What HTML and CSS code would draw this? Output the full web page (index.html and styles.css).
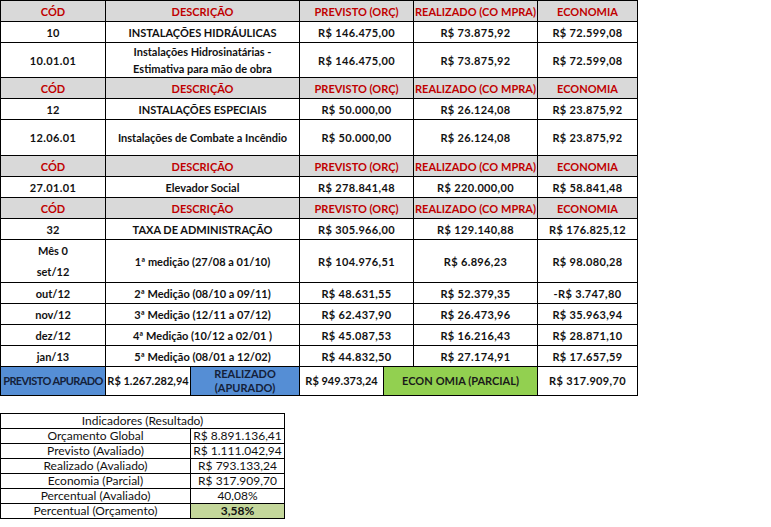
FILE: index.html
```html
<!DOCTYPE html>
<html lang="pt-BR">
<head>
<meta charset="utf-8">
<title>Planilha</title>
<link rel="stylesheet" href="styles.css">
</head>
<body>
<div class="sheet">
<table class="main">
  <colgroup>
    <col class="c1"><col class="c2"><col class="c3"><col class="c4"><col class="c5"><col class="c6"><col class="c7">
  </colgroup>
  <tr class="hd"><td>CÓD</td><td colspan="2">DESCRIÇÃO</td><td colspan="2">PREVISTO (ORÇ)</td><td>REALIZADO (CO<span class="k">MPRA)</span></td><td>ECONOMIA</td></tr>
  <tr class="r"><td>10</td><td colspan="2">INSTALAÇÕES HIDRÁULICAS</td><td colspan="2" class="m">R$ 146.475,00</td><td class="m">R$ 73.875,92</td><td class="m">R$ 72.599,08</td></tr>
  <tr class="tall"><td class="m">10.01.01</td><td colspan="2">Instalações Hidrosinatárias -<br>Estimativa para mão de obra</td><td colspan="2" class="m">R$ 146.475,00</td><td class="m">R$ 73.875,92</td><td class="m">R$ 72.599,08</td></tr>
  <tr class="hd"><td>CÓD</td><td colspan="2">DESCRIÇÃO</td><td colspan="2">PREVISTO (ORÇ)</td><td>REALIZADO (CO<span class="k">MPRA)</span></td><td>ECONOMIA</td></tr>
  <tr class="r"><td>12</td><td colspan="2">INSTALAÇÕES ESPECIAIS</td><td colspan="2" class="m">R$ 50.000,00</td><td class="m">R$ 26.124,08</td><td class="m">R$ 23.875,92</td></tr>
  <tr class="tall2"><td class="m">12.06.01</td><td colspan="2">Instalações de Combate a Incêndio</td><td colspan="2" class="m">R$ 50.000,00</td><td class="m">R$ 26.124,08</td><td class="m">R$ 23.875,92</td></tr>
  <tr class="hd"><td>CÓD</td><td colspan="2">DESCRIÇÃO</td><td colspan="2">PREVISTO (ORÇ)</td><td>REALIZADO (CO<span class="k">MPRA)</span></td><td>ECONOMIA</td></tr>
  <tr class="r"><td class="m">27.01.01</td><td colspan="2">Elevador Social</td><td colspan="2" class="m">R$ 278.841,48</td><td class="m">R$ 220.000,00</td><td class="m">R$ 58.841,48</td></tr>
  <tr class="hd"><td>CÓD</td><td colspan="2">DESCRIÇÃO</td><td colspan="2">PREVISTO (ORÇ)</td><td>REALIZADO (CO<span class="k">MPRA)</span></td><td>ECONOMIA</td></tr>
  <tr class="r"><td>32</td><td colspan="2">TAXA DE ADMINISTRAÇÃO</td><td colspan="2" class="m">R$ 305.966,00</td><td class="m">R$ 129.140,88</td><td class="m">R$ 176.825,12</td></tr>
  <tr class="dbl"><td><div class="sub">Mês 0</div><div class="sub">set/12</div></td><td colspan="2">1ª medição (27/08 a 01/10)</td><td colspan="2" class="m">R$ 104.976,51</td><td class="m">R$ 6.896,23</td><td class="m">R$ 98.080,28</td></tr>
  <tr class="r"><td>out/12</td><td colspan="2">2ª Medição (08/10 a 09/11)</td><td colspan="2" class="m">R$ 48.631,55</td><td class="m">R$ 52.379,35</td><td class="m">-R$ 3.747,80</td></tr>
  <tr class="r"><td>nov/12</td><td colspan="2">3ª Medição (12/11 a 07/12)</td><td colspan="2" class="m">R$ 62.437,90</td><td class="m">R$ 26.473,96</td><td class="m">R$ 35.963,94</td></tr>
  <tr class="r"><td>dez/12</td><td colspan="2">4ª Medição (10/12 a 02/01 )</td><td colspan="2" class="m">R$ 45.087,53</td><td class="m">R$ 16.216,43</td><td class="m">R$ 28.871,10</td></tr>
  <tr class="r"><td>jan/13</td><td colspan="2">5ª Medição (08/01 a 12/02)</td><td colspan="2" class="m">R$ 44.832,50</td><td class="m">R$ 27.174,91</td><td class="m">R$ 17.657,59</td></tr>
  <tr class="sum"><td class="blue tight">PREVISTO APURADO</td><td>R$ 1.267.282,94</td><td class="blue">REALIZADO<br>(APURADO)</td><td>R$ 949.373,24</td><td colspan="2" class="green">ECON<span class="k">OMIA</span> (PARCIAL)</td><td class="m">R$ 317.909,70</td></tr>
</table>

<table class="ind">
  <colgroup><col class="i1"><col class="i2"></colgroup>
  <tr><td colspan="2">Indicadores (Resultado)</td></tr>
  <tr><td>Orçamento Global</td><td>R$ 8.891.136,41</td></tr>
  <tr><td>Previsto (Avaliado)</td><td>R$ 1.111.042,94</td></tr>
  <tr><td>Realizado (Avaliado)</td><td>R$ 793.133,24</td></tr>
  <tr><td>Economia (Parcial)</td><td>R$ 317.909,70</td></tr>
  <tr><td>Percentual (Avaliado)</td><td>40,08%</td></tr>
  <tr><td>Percentual (Orçamento)</td><td class="pct">3,58%</td></tr>
</table>
</div>
</body>
</html>
```
FILE: styles.css
```css
html, body {
  margin: 0;
  padding: 0;
  background: #fff;
}
body {
  font-family: "Lato", "Liberation Sans", sans-serif;
  color: #111;
}
.sheet {
  display: flex;
  flex-direction: column;
  align-items: flex-start;
  gap: 17px;
}
table {
  border-collapse: collapse;
  table-layout: fixed;
}
td {
  border: 1px solid #000;
  padding: 0;
  text-align: center;
  vertical-align: middle;
  white-space: nowrap;
  overflow: hidden;
}
.main {
  width: 637px;
  font-size: 11px;
  font-weight: 700;
}
.c1 { width: 105px; }
.c2 { width: 85px; }
.c3 { width: 109px; }
.c4 { width: 84px; }
.c5 { width: 30px; }
.c6 { width: 124px; }
.c7 { width: 100px; }
.main td.m { letter-spacing: 0.35px; }
.k { margin-left: 3px; }
.main tr.hd td {
  background: #d9d9d9;
  color: #c00000;
  height: 20px;
}
.main tr.r td { height: 20px; }
.main tr.tall td { height: 34px; line-height: 17px; }
.main tr.tall2 td { height: 35px; }
.main tr.dbl td { height: 42px; }
.sub { height: 21px; line-height: 21px; }
.main tr.sum td { height: 28px; line-height: 14px; }
.blue { background: #558ed5; color: #14213a; }
.green { background: #92d050; color: #1a1a1a; }
.main td.tight { letter-spacing: -0.6px; }
.ind {
  width: 284px;
  font-size: 12px;
  font-weight: 400;
}
.i1 { width: 190px; }
.i2 { width: 94px; }
.ind td { height: 14px; line-height: 14px; }
.ind td.pct { background: #c4d79b; font-weight: 700; }
```
